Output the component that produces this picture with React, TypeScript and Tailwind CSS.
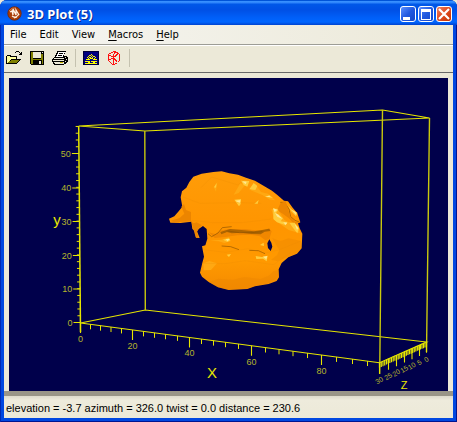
import React from "react";

const Y_TICKS = [0, 10, 20, 30, 40, 50];
const Y_POS = [322.5, 289, 255.5, 221.5, 188, 153.5];
const X_MINOR = [90.5, 100.5, 111, 121.5, 143.5, 154.5, 165.5, 177.5, 201.5, 213.5, 225.5, 238.5, 265.5, 279, 293, 307.5, 336.5, 352.5, 367.5];
const X_MAJOR = [
  { x: 80.5, label: "0" },
  { x: 132.5, label: "20" },
  { x: 189.5, label: "40" },
  { x: 251.5, label: "60" },
  { x: 321.5, label: "80" },
];
const Z_MAJOR = [
  { x: 379.5, label: "30" },
  { x: 388.5, label: "25" },
  { x: 396.5, label: "20" },
  { x: 404.5, label: "15" },
  { x: 412, label: "10" },
  { x: 419.5, label: "5" },
  { x: 426.5, label: "0" },
];
const xAxisY = (x: number) => 323 + (x - 80.5) * 0.1325;
const zAxisY = (x: number) => 362.7 - (x - 379.5) * 0.445;
const yAxisX = (y: number) => 80.5 - (323 - y) * 0.0095;

const minorY = Array.from({ length: 30 }, (_, i) => 322.5 - i * 6.76);
const minorZ = Array.from({ length: 30 }, (_, i) => 379.5 + i * 1.75 - i * i * 0.0045);

function Surface() {
  return (
    <g transform="translate(160 160) scale(0.33333)">
      <defs>
        <linearGradient id="body" x1="0" y1="0" x2="0" y2="1">
          <stop offset="0" stopColor="#ff9c08" />
          <stop offset="0.45" stopColor="#ff9500" />
          <stop offset="0.75" stopColor="#ff9900" />
          <stop offset="1" stopColor="#f58b00" />
        </linearGradient>
      </defs>
      <path
        fill="url(#body)"
        fillRule="evenodd"
        d="M100 50L125 41L160 36L185 34L208 40L234 44L258 53L285 62L308 76L336 92L352 105L372 122L384 124L398 143L412 160L421 187L414 190L419 205L427 221L425 265L411 281L385 292L365 309L356 328L357 352L350 363L326 372L285 379L262 387L206 390L174 382L146 366L126 350L120 338L127 308L132 290L126 259L136 256L142 236L140 207L129 198L117 206L111 214L119 234L108 233L106 214L97 207L94 185L62 189L31 188L27 176L43 169L56 154L67 140L62 112L66 94L79 83L88 66ZM328 238L322 250L324 264L332 273L337 260L334 248Z"
      />
      <path fill="#f08700" d="M146 217L166 222L185 211L207 207L255 207L305 213L327 205L335 214L328 237L316 241L300 229L272 224L232 226L196 231L164 234Z" />
      <path fill="#ae6500" d="M181 216L210 207L252 211L282 214L306 210L328 206L331 213L314 215L302 223L276 222L243 218L215 220L201 216L184 223Z" />
      <path fill="none" stroke="#8f5300" strokeWidth="2" d="M144 221L155 230L174 219L187 203L215 200M203 213L238 218L273 218L307 215M268 271L295 272L315 281M185 258L212 260L237 269M361 127L373 127L387 147L392 170L405 181L418 186" />
      <path fill="#ec8500" d="M64 140L72 132L78 150L93 156L93 184L72 185L46 187L30 183L59 174L73 161ZM94 185L101 190L110 187L126 196L116 205L111 216L116 233L107 232ZM361 130L377 123L385 151L391 170L405 185L421 188L402 192L387 175L368 161L352 151Z" />
      <path fill="#ffa812" d="M161 82L172 66L168 95ZM241 70L255 76L236 99L221 104ZM272 91L286 72L303 96L324 101L346 121L330 119L307 105ZM150 242L184 239L207 232L212 244L193 249L176 244ZM130 310L148 303L171 310L153 330L131 331ZM334 148L351 145L374 181L415 201L420 220L386 210L343 180Z" />
      <path fill="#ffcc3c" d="M162 82L170 69L168 83ZM243 62L268 63L262 80L251 75ZM281 69L292 78L286 90L268 88ZM223 119L243 117L242 132L237 139ZM283 131L296 120L293 132ZM314 110L329 106L339 114ZM340 145L355 149L348 159L369 175L362 184L382 187L377 196L351 187L340 177ZM384 137L397 150L412 158L408 169L393 153ZM388 188L404 188L417 205L412 220L400 205ZM189 239L207 235L211 241L202 246ZM300 255L311 248L312 258ZM287 288L305 291L323 287L320 304L309 296L289 297ZM200 284L213 282L207 291Z" />
      <path fill="#ffe790" d="M246 64L260 65L257 73ZM339 145L352 149L344 157ZM345 159L356 164L366 176L352 170ZM226 122L241 120L240 130ZM317 109L328 107L331 112ZM197 238L209 237L203 244ZM309 290L322 288L319 298ZM395 149L407 156L409 165ZM370 187L382 188L377 195ZM404 192L415 204L411 210Z" />
      <path fill="#e98400" d="M175 356L218 359L254 351L301 357L326 347L340 333L355 331L355 352L326 370L285 378L262 386L206 389L174 382L146 366ZM336 234L361 243L386 235L423 243L424 265L410 280L384 290L353 304L333 299L351 286L358 270Z" opacity="0.35" />
      <path fill="none" stroke="#e88600" strokeWidth="2" opacity="0.3" d="M123 83L155 51L234 75L258 54M69 111L120 130L241 128L304 130M95 181L157 188L249 188L334 177M132 269L196 277L265 266L314 279L356 270L420 244M125 310L196 311L256 302L341 314L393 277" />
    </g>
  );
}

function Plot() {
  return (
    <svg className="block h-auto w-full bg-[#00004b]" viewBox="9 78 439 313" role="img" aria-label="3D surface plot">
      <g fill="none" stroke="#e6e600" strokeWidth="1.15">
        <path d="M78.7 126L382.5 110L429.5 118L144.8 131ZM80.5 323L145.3 310L426.5 342L379.5 362.7Z" />
        <path d="M144.8 131L145.3 310M382.5 110L379.7 374M429.5 118L426.5 352" strokeWidth="1.4" stroke="#c9c90d" />
        <path d="M78.7 126L80.5 332" strokeWidth="1.5" />
        {minorY.map((y) => <path key={y} d={`M${yAxisX(y) - 3} ${y}H${yAxisX(y)}`} strokeWidth="1" />)}
        {Y_POS.map((y) => <path key={y} d={`M${yAxisX(y) - 7} ${y}H${yAxisX(y)}`} strokeWidth="1.2" />)}
        {X_MINOR.map((x) => <path key={x} d={`M${x} ${xAxisY(x)}v5`} strokeWidth="1" />)}
        {X_MAJOR.map(({ x }) => <path key={x} d={`M${x} ${xAxisY(x)}v10`} strokeWidth="1.1" />)}
        {minorZ.map((x) => <path key={x} d={`M${x} ${zAxisY(x)}v5`} strokeWidth="1.2" />)}
        {Z_MAJOR.map(({ x }) => <path key={x} d={`M${x} ${zAxisY(x)}v11`} strokeWidth="1.1" />)}
      </g>
      <Surface />
      <g className="font-['Liberation_Sans_Narrow','Liberation_Sans',sans-serif] text-[9px]" fill="#b5b52c" textAnchor="middle">
        {Y_TICKS.map((n, i) => <text key={n} x={yAxisX(Y_POS[i]) - 8} y={Y_POS[i] + 3} textAnchor="end">{n}</text>)}
        {X_MAJOR.map(({ x, label }) => <text key={label} x={x} y={xAxisY(x) + 19}>{label}</text>)}
        {Z_MAJOR.map(({ x, label }) => (
          <text key={label} x={x} y={zAxisY(x) + 20} className="text-[7px]" transform={`rotate(-32 ${x} ${zAxisY(x) + 18})`}>{label}</text>
        ))}
      </g>
      <g className="font-['Liberation_Sans_Narrow','Liberation_Sans',sans-serif]" fill="#e6e600" textAnchor="middle">
        <text x="57" y="225" className="text-[15px]">y</text>
        <text x="212" y="378" className="text-[15px]">X</text>
        <text x="404" y="389" className="text-[11px]">Z</text>
      </g>
    </svg>
  );
}

function AppIcon() {
  return (
    <svg className="size-4" viewBox="0 0 16 16" aria-hidden="true">
      <circle cx="7.5" cy="7.5" r="6.7" fill="#a83c08" stroke="#742600" strokeWidth="0.8" />
      <path d="M2 5Q5 1 9 2" stroke="#d77b4a" fill="none" />
      <path d="M3 6l2-1 1 4 0-6 3 6 0-5 3 5M5 10q4 3 7-2M7 12l3-1" fill="none" stroke="#fff2e6" strokeWidth="1.3" />
    </svg>
  );
}

function OpenIcon() {
  return (
    <svg className="h-4 w-4" viewBox="0 0 16 16" shapeRendering="crispEdges" aria-hidden="true">
      <path fill="#000" d="M1 5h4v1h6v3h4v1h-1v1h-1v1h-1v1h-1v1H0V6h1z" />
      <path fill="#ffff9c" d="M1 6h3v1h6v2H5v1H4v1H3v1H2v1H1z" />
      <path fill="#808000" d="M5 10h8v1h-1v1h-1v1H2v-1h1v-1h2z" />
      <path fill="#000" d="M9 2h1v1H9zM10 1h3v1h-3zM13 2h1v1h-1zM14 3h1v1h-1zM15 2h1v3h-3V4h2z" />
    </svg>
  );
}

function SaveIcon() {
  return (
    <svg className="h-4 w-4" viewBox="0 0 16 16" shapeRendering="crispEdges" aria-hidden="true">
      <path fill="#000" d="M1 1h14v14H2v-1H1z" />
      <path fill="#808000" d="M2 2h2v7h8V4h2v10H2z" />
      <path fill="#ece9d8" d="M4 2h8v6H4zM13 2h1v1h-1zM10 11h2v3h-2z" />
      <path fill="#000" d="M4 10h9v4h-1v-3h-2v3H4z" />
    </svg>
  );
}

function PrintIcon() {
  return (
    <svg className="h-4 w-4" viewBox="0 0 16 16" shapeRendering="crispEdges" aria-hidden="true">
      <path fill="#000" d="M5 1h9v1h-1v2h-1v2h3v1h1v5h-1v1h-1v1h-2v1H2v-1H1v-2H0V9h1V8h1V7h1V5h1V3h1z" />
      <path fill="#fff" d="M6 2h7v1h-1v2h-1v2H4V6h1V4h1z" />
      <path fill="#000" d="M7 3h4v1H7zM6 5h4v1H6z" />
      <path fill="#ece9d8" d="M2 8h10v1H2zM1 10h11v1H1zM2 12h10v2H3v-1H2zM13 7h1v1h-1zM14 9h1v1h-1zM13 11h1v1h-1z" />
      <path fill="#c6b500" d="M8 12h3v1H8z" />
    </svg>
  );
}

function ChartIcon() {
  return (
    <svg className="h-4 w-4" viewBox="0 0 16 16" shapeRendering="crispEdges" aria-hidden="true">
      <path fill="#000080" stroke="#00003c" d="M.5 1.5h15v13H.5z" />
      <path fill="#ffff00" d="M8 4h1v1H8zM6 5h2v1H6zM9 5h1v1H9zM5 6h1v1H5zM8 6h1v1H8zM10 6h2v1h-2zM4 7h1v1H4zM6 7h2v1H6zM9 7h1v1H9zM12 7h1v1h-1zM5 8h1v1H5zM7 8h3v1H7zM11 8h1v1h-1zM3 9h4v1H3zM10 9h4v1h-4zM2 11h5v1H2zM8 11h6v1H8zM2 13h12v1H2zM5 12h2v1H5zM10 12h2v1h-2z" />
    </svg>
  );
}

function WireIcon() {
  return (
    <svg className="h-4 w-4" viewBox="0 0 16 16" shapeRendering="crispEdges" aria-hidden="true">
      <path fill="none" stroke="#ff1010" d="M2.5 4.5l3-2 3-1 4 2 1 1v6l-2 2-3 2h-2l-4-4zM2.5 4.5l5 3 5-4M7.5 7.5v7M7.5 7.5l-5 3M7.5 7.5l4 5M8.5 1.5l-1 6" />
    </svg>
  );
}

const captionButton = "flex h-4 w-4 items-center justify-center rounded-[3px] border border-white";

const tools = [
  { label: "Open", icon: <OpenIcon /> },
  { label: "Save", icon: <SaveIcon /> },
  { label: "Print", icon: <PrintIcon /> },
];

export default function App() {
  return (
    <div className="bg-[#ece9d8]">
      <div className="overflow-hidden rounded-t-[7px] bg-[#0047e0] shadow-[inset_1px_0_#0028b4,inset_-1px_-1px_#001590]">
        <header className="flex h-[25px] items-center gap-1 bg-[linear-gradient(to_bottom,#0054d8_0px,#0054d8_1px,#3b94ff_1px,#2c82fa_3px,#0058e8_4px,#0050e5_10px,#005ef7_17px,#0066ff_22px,#0043cf_25px)] pr-[5px] pl-[7px] pt-[3px]">
          <AppIcon />
          <h1 className="grow font-['Noto_Sans',sans-serif] text-[13px] leading-4 font-bold text-white [text-shadow:1px_1px_#0a2a90]">3D Plot (5)</h1>
          <div className="flex gap-[2px]">
            <button type="button" aria-label="Minimize" className={`${captionButton} bg-[linear-gradient(135deg,#5b8fff,#2159e0_50%,#1546c8)]`}>
              <svg className="size-3" viewBox="0 0 12 12" shapeRendering="crispEdges"><path fill="#fff" d="M1 9h7v3H1z" /></svg>
            </button>
            <button type="button" aria-label="Maximize" className={`${captionButton} bg-[linear-gradient(135deg,#5b8fff,#2159e0_50%,#1546c8)]`}>
              <svg className="size-3" viewBox="0 0 12 12" shapeRendering="crispEdges"><path fill="#fff" fillRule="evenodd" d="M1 1h10v11H1zM2 4v7h8V4z" /></svg>
            </button>
            <button type="button" aria-label="Close" className={`${captionButton} bg-[linear-gradient(135deg,#f08060,#e04b20_50%,#c03000)]`}>
              <svg className="size-3" viewBox="0 0 12 12"><path stroke="#fff" strokeWidth="2.2" d="M1 1l10 10M11 1L1 11" /></svg>
            </button>
          </div>
        </header>
        <div className="mx-1 bg-[#ece9d8]">
          <nav className="flex h-5 items-center gap-[13px] border-b border-[#9d9d96] bg-linear-to-r from-[#f6f6f3] to-[#ece9d8] pt-[2px] pl-[6px] font-['DejaVu_Sans_Condensed','DejaVu_Sans',sans-serif] text-[11px] text-black">
            <button type="button">File</button>
            <button type="button">Edit</button>
            <button type="button">View</button>
            <button type="button"><span className="underline underline-offset-2">M</span>acros</button>
            <button type="button"><span className="underline underline-offset-2">H</span>elp</button>
          </nav>
          <div className="flex h-7 items-center border-t border-b border-t-white border-b-[#686868] pb-[3px] pl-[2px]" role="toolbar" aria-label="Plot tools">
            <div className="flex gap-[7px]">
              {tools.map((t) => (
                <button key={t.label} type="button" aria-label={t.label}>{t.icon}</button>
              ))}
            </div>
            <div className="mx-[7px] h-[18px] w-px bg-[#c5c2b0]" />
            <div className="flex gap-[7px]">
              <button type="button" aria-label="Chart"><ChartIcon /></button>
              <button type="button" aria-label="Wireframe"><WireIcon /></button>
            </div>
            <div className="mx-[7px] h-[18px] w-px bg-[#c5c2b0]" />
          </div>
          <main className="px-[5px] pt-[5px]">
            <Plot />
          </main>
          <footer className="flex h-[27px] items-center border-t-[5px] border-[#999588] bg-linear-to-b from-[#dedbcd] via-[#eeebdc] via-20% to-[#ece9d8] pl-[2px] font-['Liberation_Sans',sans-serif] text-[11px] text-black">
            <p className="pt-[2px]">elevation = -3.7 azimuth = 326.0 twist = 0.0 distance = 230.6</p>
          </footer>
        </div>
        <div className="h-1" />
      </div>
    </div>
  );
}
